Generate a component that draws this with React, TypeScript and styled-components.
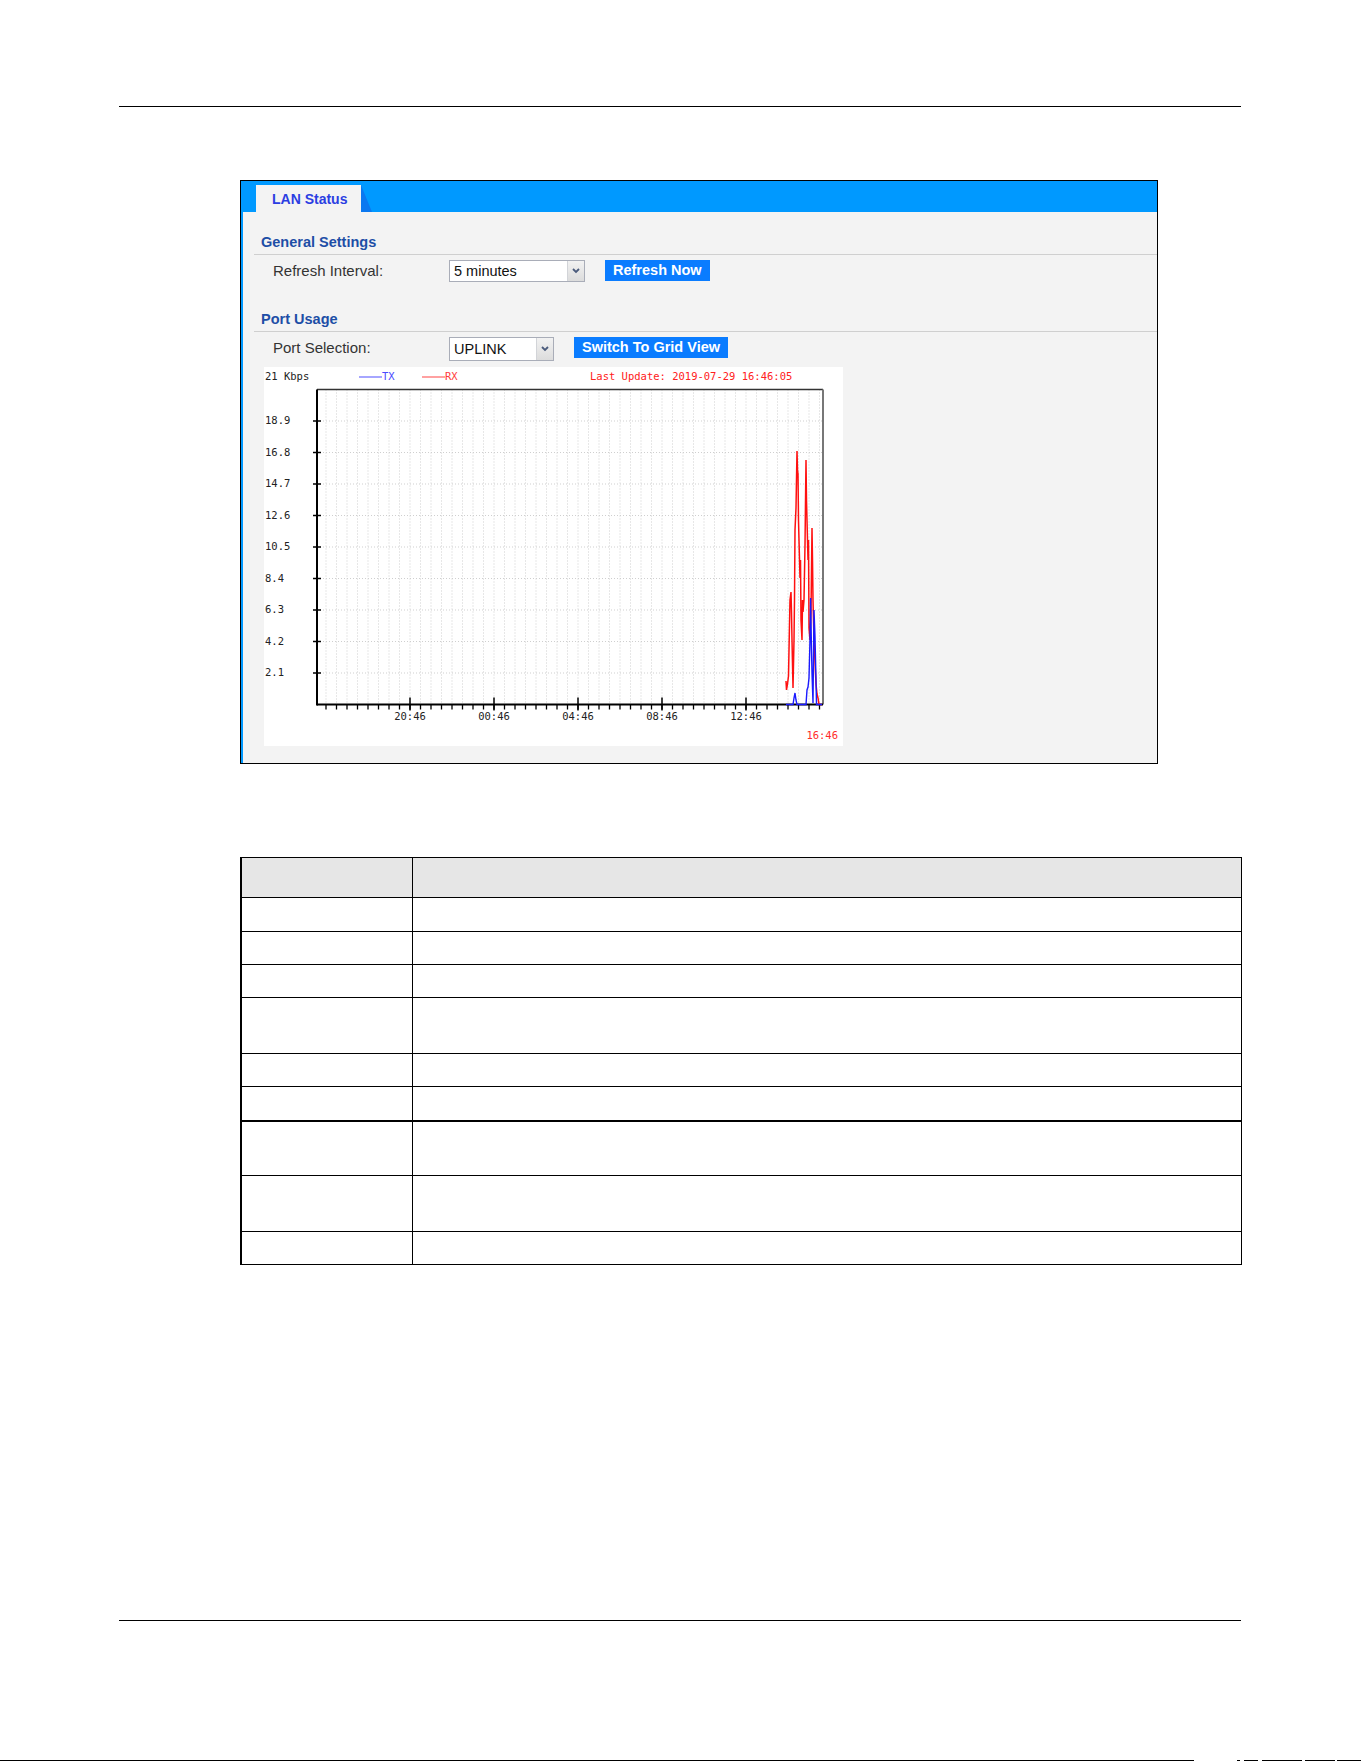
import React from "react";
import styled, { createGlobalStyle } from "styled-components";

const GlobalStyle = createGlobalStyle`
  html, body { margin: 0; padding: 0; background: #fff; }
  body { font-family: "Liberation Sans", Arial, sans-serif; }
  * { box-sizing: border-box; }
`;

const Page = styled.div`
  width: 1361px;
  height: 1761px;
  display: flex;
  flex-direction: column;
  padding-top: 106px;
  background: #fff;
`;

const Rule = styled.div<{ $push?: boolean }>`
  margin-left: 119px;
  width: 1122px;
  height: 1px;
  flex: none;
  background: #000;
  margin-top: ${(p) => (p.$push ? "auto" : "0")};
`;

const Panel = styled.section`
  margin-top: 73px;
  margin-left: 240px;
  width: 918px;
  height: 584px;
  flex: none;
  border: 1px solid #000;
  background: #f3f3f3;
  box-shadow: inset 2px 0 0 #0099ff;
  display: flex;
  flex-direction: column;
`;

const Header = styled.div`
  height: 31px;
  flex: none;
  background: #0099ff;
  display: flex;
  align-items: flex-end;
  padding-left: 15px;
`;

const Tab = styled.div`
  width: 105px;
  height: 27px;
  background: #f3f3f3;
  color: #2b3ee2;
  font-weight: bold;
  font-size: 14px;
  line-height: 27px;
  padding-left: 16px;
  padding-top: 1px;
`;

const TabEdge = styled.div`
  width: 11px;
  height: 27px;
  background: #0b78f0;
  clip-path: polygon(0 0, 100% 100%, 0 100%);
`;

const Body = styled.div`
  padding-left: 13px;
  display: flex;
  flex-direction: column;
`;

const SectionTitle = styled.h2<{ $gap: number }>`
  margin: ${(p) => p.$gap}px 0 0 0;
  height: 20px;
  line-height: 20px;
  padding-left: 7px;
  font-size: 14.5px;
  font-weight: bold;
  color: #1d4ea6;
`;

const Divider = styled.div`
  margin-top: 2px;
  height: 1px;
  background: #cfcfcf;
`;

const FieldRow = styled.div<{ $h: number }>`
  margin-top: 5px;
  height: ${(p) => p.$h}px;
  display: flex;
  align-items: flex-start;
  padding-left: 19px;
`;

const Label = styled.span`
  width: 176px;
  flex: none;
  font-size: 15px;
  color: #333;
  line-height: 22px;
`;

const Select = styled.div<{ $w: number; $h: number }>`
  width: ${(p) => p.$w}px;
  height: ${(p) => p.$h}px;
  flex: none;
  border: 1px solid #a9adb8;
  background: #fff;
  display: flex;
`;

const SelectValue = styled.span`
  flex: 1;
  padding-left: 4px;
  font-size: 14.5px;
  color: #111;
  display: flex;
  align-items: center;
`;

const SelectArrow = styled.span`
  width: 17px;
  flex: none;
  border-left: 1px solid #d2d4d8;
  background: linear-gradient(#f2f2f2, #dcdcdc);
  display: flex;
  align-items: center;
  justify-content: center;
`;

const ActionButton = styled.button`
  margin-left: 20px;
  height: 21px;
  padding: 0 8px;
  border: none;
  background: #0a7cff;
  color: #fff;
  font-family: "Liberation Sans", Arial, sans-serif;
  font-weight: bold;
  font-size: 14.5px;
  line-height: 21px;
`;

const ChartBox = styled.div`
  margin-top: 6px;
  margin-left: 10px;
  width: 579px;
  height: 379px;
  background: #fff;
`;

const DescTable = styled.table`
  margin-top: 93px;
  margin-left: 240px;
  width: 1002px;
  flex: none;
  border-collapse: collapse;
  table-layout: fixed;
`;

const Cell = styled.td<{ $head?: boolean; $thick?: boolean; $first?: boolean }>`
  border: 1px solid #000;
  border-top-width: ${(p) => (p.$thick ? 2 : 1)}px;
  border-left-width: ${(p) => (p.$first ? 2 : 1)}px;
  background: ${(p) => (p.$head ? "#e6e6e6" : "#fff")};
  padding: 0;
`;

const EdgeRow = styled.div`
  margin-top: 139px;
  height: 1px;
  flex: none;
  display: flex;
`;

const EdgeSeg = styled.span<{ $w: number; $gap: number }>`
  width: ${(p) => p.$w}px;
  margin-left: ${(p) => p.$gap}px;
  height: 1px;
  background: #000;
`;

const Chevron = () => (
  <svg width="8" height="6" viewBox="0 0 8 6">
    <path d="M1 1 L4 4 L7 1" fill="none" stroke="#4b5b7c" strokeWidth="1.8" />
  </svg>
);

// Chart geometry (svg-local units)
const OX = 264;
const OY = 367;
const PL = 53;
const PR = 559;
const PT = 22.5;
const PB = 337.5;
const STEP_Y = 31.5;
const MONO = '"DejaVu Sans Mono", "Liberation Mono", monospace';

const yLabels = ["2.1", "4.2", "6.3", "8.4", "10.5", "12.6", "14.7", "16.8", "18.9"];
const timeLabels = ["20:46", "00:46", "04:46", "08:46", "12:46"];

const rx: [number, number][] = [
  [786, 681], [786.5, 690], [787.5, 684], [788.5, 676], [789, 650], [790, 600], [791, 592],
  [791.5, 612], [792, 640], [793, 688], [794, 640], [794.5, 600], [795, 530], [796, 508],
  [797, 451], [797.5, 470], [798, 474], [798.5, 520], [799, 540], [800, 578], [800.5, 560],
  [801, 620], [802, 640], [802.5, 600], [803, 612], [804, 600], [805, 545], [806, 460],
  [806.5, 500], [807, 520], [808, 560], [808.5, 540], [809, 628], [810, 640], [811, 612],
  [812, 528], [812.5, 560], [813, 600], [814, 640], [815, 662], [816, 684], [817, 694],
  [818, 698], [819, 704.5], [822, 704.5],
];

const tx: [number, number][] = [
  [786, 704.5], [793, 704.5], [794, 698], [795, 693], [796, 700], [797, 704.5],
  [806, 704.5], [807, 690], [808, 687], [809, 678], [810, 640], [810.6, 598],
  [811.5, 650], [812, 673], [813, 703], [814, 610], [815, 637], [816, 680],
  [816.5, 704.5], [822, 704.5],
];

const toPoints = (pts: [number, number][]) =>
  pts.map(([x, y]) => `${x - OX},${y - OY}`).join(" ");

const UsageChart = () => {
  const ticks: number[] = [];
  for (let x = 62; x < PR - 1; x += 10.5) ticks.push(x);
  const majors = [146, 230, 314, 398, 482];
  return (
    <svg width="579" height="379" viewBox="0 0 579 379">
      {ticks.map((x) => (
        <line key={`g${x}`} x1={x} y1={PT} x2={x} y2={PB} stroke="#cfcfcf" strokeWidth="1" strokeDasharray="1 2" />
      ))}
      {yLabels.map((_, i) => {
        const y = PB - STEP_Y * (i + 1);
        return <line key={`h${i}`} x1={PL} y1={y} x2={PR} y2={y} stroke="#cfcfcf" strokeWidth="1" strokeDasharray="1 2" />;
      })}
      <line x1={PL} y1={PT} x2={PR} y2={PT} stroke="#333" strokeWidth="1.5" />
      <line x1={PR} y1={PT} x2={PR} y2={PB} stroke="#777" strokeWidth="2" />
      <line x1={PL} y1={PT} x2={PL} y2={PB + 1} stroke="#000" strokeWidth="2" />
      <line x1={PL} y1={PB} x2={PR} y2={PB} stroke="#000" strokeWidth="2" />
      {yLabels.map((t, i) => {
        const y = PB - STEP_Y * (i + 1);
        return (
          <g key={`y${t}`}>
            <line x1={PL - 4} y1={y} x2={PL + 4} y2={y} stroke="#000" strokeWidth="1.5" />
            <text x="1" y={y} dominantBaseline="middle" fontFamily={MONO} fontSize="10.5" fill="#222">
              {t}
            </text>
          </g>
        );
      })}
      {ticks.map((x) => (
        <line key={`t${x}`} x1={x} y1={PB} x2={x} y2={PB + 5} stroke="#000" strokeWidth="1.3" />
      ))}
      {majors.map((x, i) => (
        <g key={`m${x}`}>
          <line x1={x} y1={PB - 7} x2={x} y2={PB + 6} stroke="#000" strokeWidth="1.5" />
          <text x={x} y="350" textAnchor="middle" dominantBaseline="middle" fontFamily={MONO} fontSize="10.5" fill="#222">
            {timeLabels[i]}
          </text>
        </g>
      ))}
      <text x="574" y="369" textAnchor="end" dominantBaseline="middle" fontFamily={MONO} fontSize="10.5" fill="#ff2a2a">
        16:46
      </text>
      <text x="1" y="10" dominantBaseline="middle" fontFamily={MONO} fontSize="10.5" fill="#222">
        21 Kbps
      </text>
      <line x1="95" y1="10" x2="118" y2="10" stroke="#6b6bff" strokeWidth="1.2" />
      <text x="118" y="10" dominantBaseline="middle" fontFamily={MONO} fontSize="10.5" fill="#4a4aff">
        TX
      </text>
      <line x1="158" y1="10" x2="181" y2="10" stroke="#ff6262" strokeWidth="1.2" />
      <text x="181" y="10" dominantBaseline="middle" fontFamily={MONO} fontSize="10.5" fill="#ff3b3b">
        RX
      </text>
      <text x="326" y="10" dominantBaseline="middle" fontFamily={MONO} fontSize="10.5" fill="#ff2020">
        Last Update: 2019-07-29 16:46:05
      </text>
      <polyline points={toPoints(rx)} fill="none" stroke="#ff1010" strokeWidth="1.5" />
      <polyline points={toPoints(tx)} fill="none" stroke="#1a1aff" strokeWidth="1.4" />
    </svg>
  );
};

const rowHeights = [40, 34, 33, 33, 56, 33, 34, 55, 56, 33];

const edgeSegments = [
  { w: 1194, gap: 0 },
  { w: 3, gap: 43 },
  { w: 14, gap: 4 },
  { w: 40, gap: 4 },
  { w: 30, gap: 3 },
  { w: 24, gap: 2 },
];

export default function App() {
  return (
    <>
      <GlobalStyle />
      <Page>
        <Rule />
        <Panel>
          <Header>
            <Tab>LAN Status</Tab>
            <TabEdge />
          </Header>
          <Body>
            <SectionTitle $gap={20}>General Settings</SectionTitle>
            <Divider />
            <FieldRow $h={22}>
              <Label>Refresh Interval:</Label>
              <Select $w={136} $h={22}>
                <SelectValue>5 minutes</SelectValue>
                <SelectArrow>
                  <Chevron />
                </SelectArrow>
              </Select>
              <ActionButton>Refresh Now</ActionButton>
            </FieldRow>
            <SectionTitle $gap={27}>Port Usage</SectionTitle>
            <Divider />
            <FieldRow $h={24}>
              <Label>Port Selection:</Label>
              <Select $w={105} $h={24}>
                <SelectValue>UPLINK</SelectValue>
                <SelectArrow>
                  <Chevron />
                </SelectArrow>
              </Select>
              <ActionButton>Switch To Grid View</ActionButton>
            </FieldRow>
            <ChartBox>
              <UsageChart />
            </ChartBox>
          </Body>
        </Panel>
        <DescTable>
          <colgroup>
            <col style={{ width: 171 }} />
            <col />
          </colgroup>
          <tbody>
            {rowHeights.map((h, i) => (
              <tr key={i} style={{ height: h }}>
                <Cell $head={i === 0} $thick={i === 7} $first />
                <Cell $head={i === 0} $thick={i === 7} />
              </tr>
            ))}
          </tbody>
        </DescTable>
        <Rule $push />
        <EdgeRow>
          {edgeSegments.map((s, i) => (
            <EdgeSeg key={i} $w={s.w} $gap={s.gap} />
          ))}
        </EdgeRow>
      </Page>
    </>
  );
}
